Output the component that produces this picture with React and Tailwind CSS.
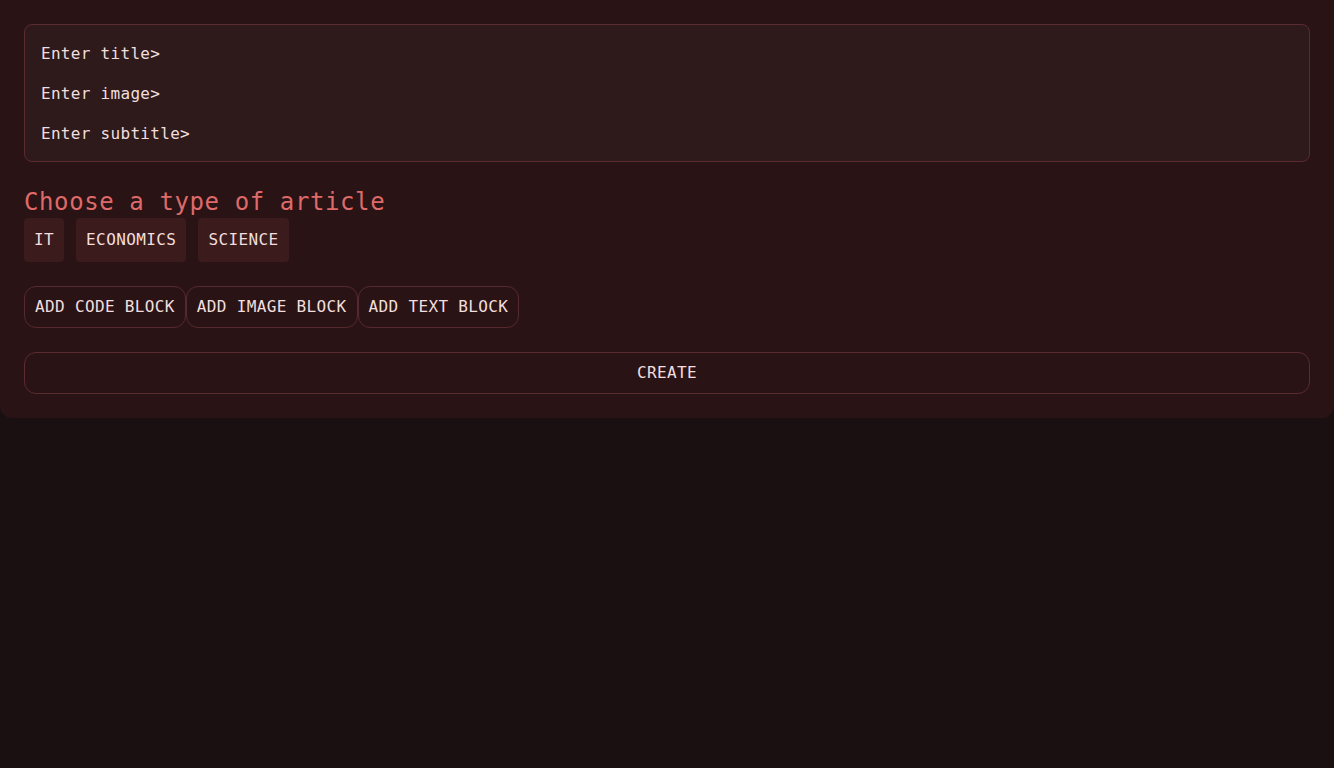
import React from "react";

const mono = { fontFamily: '"DejaVu Sans Mono", "Liberation Mono", monospace' };

export default function App() {
    const fields = ["Enter title>", "Enter image>", "Enter subtitle>"];
    const types = ["IT", "ECONOMICS", "SCIENCE"];
    const blocks = ["ADD CODE BLOCK", "ADD IMAGE BLOCK", "ADD TEXT BLOCK"];

    return (
        <div className="min-h-[768px] bg-[#1a1011] text-[#f2dede]" style={mono}>
            <div className="bg-[#2a1314] rounded-b-xl p-6 flex flex-col">
                <div className="border border-[#5a2b2f] bg-[#2e1a1a] rounded-lg px-4 pt-[9px] pb-[7px] flex flex-col">
                    {fields.map((f) => (
                        <div key={f} className="h-10 flex items-center text-[16px] tracking-[0.3px]">
                            {f}
                        </div>
                    ))}
                </div>

                <h2 className="mt-[24px] text-[24px] leading-8 text-[#de6a6a] tracking-[0.6px]">
                    Choose a type of article
                </h2>
                <div className="flex gap-3">
                    {types.map((t) => (
                        <button
                            key={t}
                            className="h-11 px-[10px] rounded bg-[#3b1b1c] text-[16px] tracking-[0.4px]"
                        >
                            {t}
                        </button>
                    ))}
                </div>

                <div className="flex mt-6">
                    {blocks.map((b) => (
                        <button
                            key={b}
                            className="h-[42px] px-[10px] rounded-xl border border-[#55292d] text-[16px] tracking-[0.35px]"
                        >
                            {b}
                        </button>
                    ))}
                </div>

                <button className="mt-6 h-[42px] w-full rounded-xl border border-[#5a2b2f] text-[16px] tracking-[0.4px]">
                    CREATE
                </button>
            </div>
        </div>
    );
}
